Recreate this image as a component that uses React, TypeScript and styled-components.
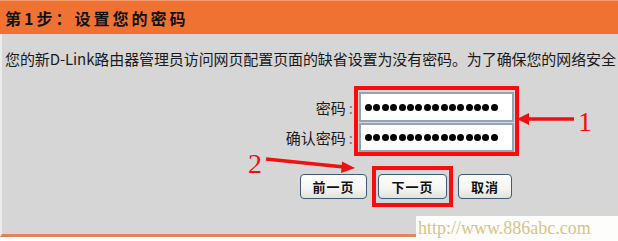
import styled, { createGlobalStyle } from "styled-components";

const GlobalStyle = createGlobalStyle`
  html, body {
    margin: 0;
    padding: 0;
    background: #ffffff;
  }
  body {
    font-family: "Noto Sans CJK SC", "Liberation Sans", sans-serif;
  }
`;

const Page = styled.div`
  position: relative;
  width: 618px;
  height: 241px;
  overflow: hidden;
  background: #ffffff;
`;

const Header = styled.div`
  height: 34px;
  box-sizing: border-box;
  border-top: 1px solid #f59a68;
  background: #f07232;
  padding-left: 5px;
  display: flex;
  align-items: center;
  font-size: 16px;
  font-weight: bold;
  letter-spacing: 3px;
  color: #111111;
`;

const Body = styled.div`
  height: 203px;
  box-sizing: border-box;
  background: #d6d6d6;
  border-left: 2px solid #ececec;
  border-bottom: 3px solid #e0845c;
  padding: 15px 0 0 3px;
  display: flex;
  flex-direction: column;
`;

const Intro = styled.div`
  font-size: 15px;
  line-height: 20px;
  color: #1a1a1a;
  white-space: nowrap;
  letter-spacing: -0.1px;
`;

const Form = styled.div`
  display: flex;
  margin: 17px 0 0 250px;
  gap: 1px;
`;

const Labels = styled.div`
  display: flex;
  flex-direction: column;
  align-items: flex-end;
  padding-top: 6px;
  width: 98px;
`;

const Label = styled.div`
  height: 30px;
  display: flex;
  align-items: center;
  font-size: 15px;
  color: #1a1a1a;
`;

const Colon = styled.span`
  margin-left: 3px;
  color: #777777;
`;

const Highlight = styled.div<{ $pad: string }>`
  border: 4px solid #ff0a0a;
  padding: ${(p) => p.$pad};
  display: flex;
  flex-direction: column;
  gap: 1px;
`;

const Field = styled.div<{ $h: number }>`
  width: 155px;
  height: ${(p) => p.$h}px;
  box-sizing: border-box;
  border: 2px solid #94a4b6;
  background: #ffffff;
  display: flex;
  align-items: center;
  padding-left: 4px;
  gap: 1.4px;
`;

const Dot = styled.span`
  width: 7px;
  height: 7px;
  border-radius: 50%;
  background: #000000;
  flex: none;
`;

const Buttons = styled.div`
  display: flex;
  align-items: center;
  margin: 10px 0 0 295px;
  gap: 5px;
`;

const Button = styled.button<{ $w: number }>`
  width: ${(p) => p.$w}px;
  height: 25px;
  box-sizing: border-box;
  border: 1.5px solid #3f5c7e;
  border-radius: 4px;
  background: linear-gradient(#ffffff, #f4f4f0 60%, #e2e2dc);
  font-family: "Noto Sans CJK SC", sans-serif;
  font-size: 13px;
  font-weight: bold;
  letter-spacing: 1px;
  color: #111111;
  padding: 0;
  cursor: pointer;
`;

const Overlay = styled.svg`
  position: absolute;
  left: 0;
  top: 0;
  pointer-events: none;
`;

const Number = styled.div<{ $x: number; $y: number }>`
  position: absolute;
  left: ${(p) => p.$x}px;
  top: ${(p) => p.$y}px;
  font-family: "Liberation Serif", serif;
  font-size: 28px;
  line-height: 28px;
  color: #f01010;
`;

const Watermark = styled.div`
  position: absolute;
  left: 416px;
  top: 216px;
  width: 202px;
  height: 25px;
  background: #fdfdfb;
  font-family: "Liberation Serif", serif;
  font-size: 18px;
  line-height: 24px;
  padding-left: 2px;
  color: #d8c488;
  white-space: nowrap;
`;

const Masked = ({ h }: { h: number }) => (
  <Field $h={h} role="textbox" aria-label="password">
    {Array.from({ length: 16 }, (_, i) => (
      <Dot key={i} />
    ))}
  </Field>
);

const App = () => {
  return (
    <Page>
      <GlobalStyle />
      <Header>第1步：设置您的密码</Header>
      <Body>
        <Intro>
          您的新D-Link路由器管理员访问网页配置页面的缺省设置为没有密码。为了确保您的网络安全
        </Intro>
        <Form>
          <Labels>
            <Label>
              密码<Colon>:</Colon>
            </Label>
            <Label>
              确认密码<Colon>:</Colon>
            </Label>
          </Labels>
          <Highlight $pad="2px 1px 0 1px">
            <Masked h={30} />
            <Masked h={29} />
          </Highlight>
        </Form>
        <Buttons>
          <Button $w={67}>前一页</Button>
          <Highlight $pad="4px 2px">
            <Button $w={69}>下一页</Button>
          </Highlight>
          <Button $w={54}>取消</Button>
        </Buttons>
      </Body>
      <Overlay width="618" height="241" viewBox="0 0 618 241">
        <line x1="574" y1="119" x2="526" y2="119" stroke="#f01010" strokeWidth="3.5" />
        <polygon points="517,119 529,113 529,125" fill="#f01010" />
        <line x1="266" y1="159" x2="344" y2="167" stroke="#f01010" strokeWidth="3.5" />
        <polygon points="355,168 342,161.5 341,173" fill="#f01010" />
      </Overlay>
      <Number $x={578} $y={108}>1</Number>
      <Number $x={248} $y={150}>2</Number>
      <Watermark>http://www.886abc.com</Watermark>
    </Page>
  );
};

export default App;
